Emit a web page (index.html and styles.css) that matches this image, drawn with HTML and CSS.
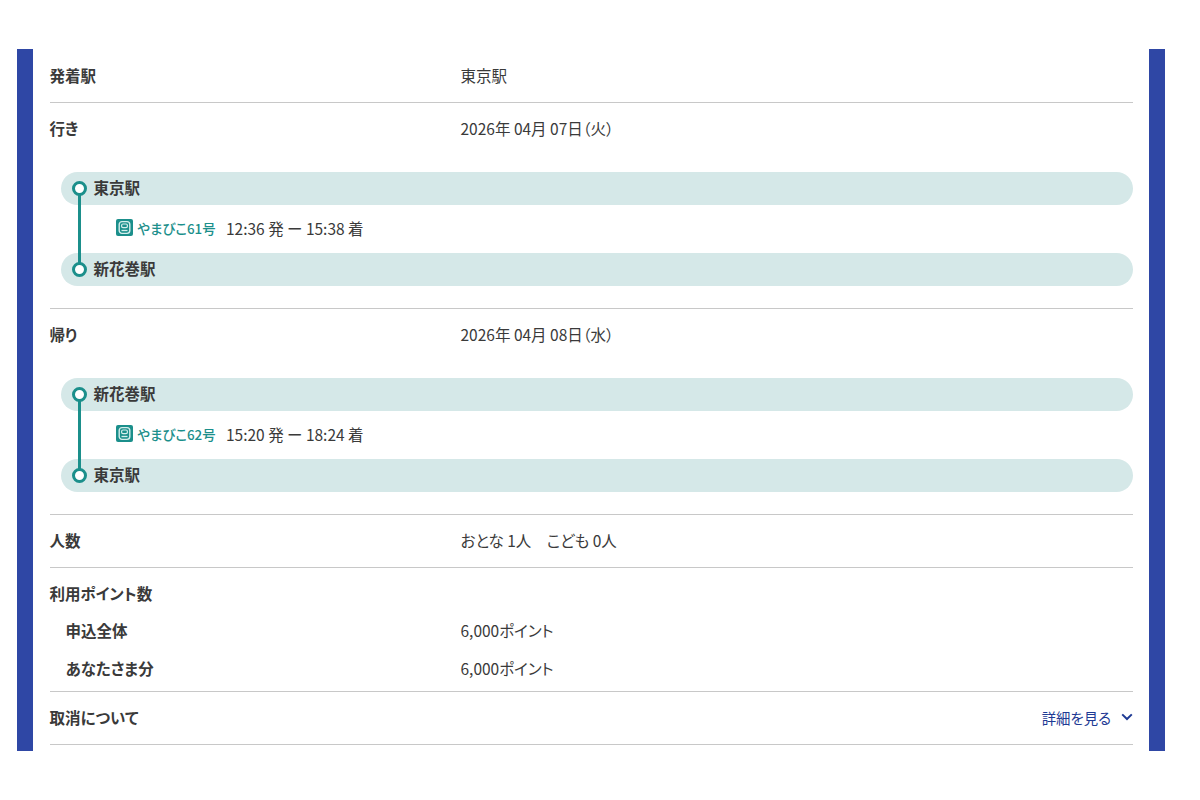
FILE: index.html
```html
<!DOCTYPE html>
<html lang="ja">
<head>
<meta charset="utf-8">
<title>申込内容</title>
<link rel="stylesheet" href="styles.css">
</head>
<body>
<main class="panel">
  <section class="row">
    <div class="line"><span class="label">発着駅</span><span>東京駅</span></div>
  </section>
  <section class="row">
    <div class="line"><span class="label">行き</span><span>2026年 04月 07日（火）</span></div>
    <div class="route">
      <div class="rail"></div>
      <div class="stop"><span class="dot"></span><span class="name">東京駅</span></div>
      <div class="train">
        <svg class="train-icon" viewBox="0 0 17 17"><rect width="17" height="17" rx="2" fill="#1b8f8b"/><rect x="3.2" y="2.6" width="10.6" height="11.8" rx="2.8" fill="none" stroke="#d5eeec" stroke-width="1.4"/><rect x="5.6" y="5" width="5.8" height="3.6" rx="1.4" fill="none" stroke="#d5eeec" stroke-width="1.2"/><path d="M5.5 11.5h6" stroke="#d5eeec" stroke-width="1.3"/></svg>
        <span class="train-name">やまびこ61号</span>
        <span>12:36 発 ー 15:38 着</span>
      </div>
      <div class="stop"><span class="dot"></span><span class="name">新花巻駅</span></div>
    </div>
  </section>
  <section class="row">
    <div class="line"><span class="label">帰り</span><span>2026年 04月 08日（水）</span></div>
    <div class="route">
      <div class="rail"></div>
      <div class="stop"><span class="dot"></span><span class="name">新花巻駅</span></div>
      <div class="train">
        <svg class="train-icon" viewBox="0 0 17 17"><rect width="17" height="17" rx="2" fill="#1b8f8b"/><rect x="3.2" y="2.6" width="10.6" height="11.8" rx="2.8" fill="none" stroke="#d5eeec" stroke-width="1.4"/><rect x="5.6" y="5" width="5.8" height="3.6" rx="1.4" fill="none" stroke="#d5eeec" stroke-width="1.2"/><path d="M5.5 11.5h6" stroke="#d5eeec" stroke-width="1.3"/></svg>
        <span class="train-name">やまびこ62号</span>
        <span>15:20 発 ー 18:24 着</span>
      </div>
      <div class="stop"><span class="dot"></span><span class="name">東京駅</span></div>
    </div>
  </section>
  <section class="row">
    <div class="line"><span class="label">人数</span><span>おとな 1人　こども 0人</span></div>
  </section>
  <section class="row points">
    <div class="pline"><span class="label">利用ポイント数</span></div>
    <div class="pline"><span class="label sub">申込全体</span><span>6,000ポイント</span></div>
    <div class="pline"><span class="label sub">あなたさま分</span><span>6,000ポイント</span></div>
  </section>
  <section class="row">
    <div class="line spread">
      <span class="label">取消について</span>
      <a class="more">詳細を見る<svg class="chev" viewBox="0 0 12 8"><path d="M1.2 1.4 6 6l4.8-4.6" fill="none" stroke="#1e3a94" stroke-width="2"/></svg></a>
    </div>
  </section>
</main>
</body>
</html>
```
FILE: styles.css
```css
* { box-sizing: border-box; }
html, body { margin: 0; background: #fff; }
body {
  font-family: "Noto Sans CJK JP", "Noto Sans", sans-serif;
  font-size: 15.5px;
  font-feature-settings: "palt";
  color: #3a3a3a;
  height: 800px;
  overflow: hidden;
}
.panel {
  width: 1148.5px;
  height: 701.5px;
  margin: 49px 0 0 16.5px;
  padding: 1px 16px 0 17px;
  border-left: 16.5px solid #2f47a5;
  border-right: 16.5px solid #2f47a5;
}
.row { border-bottom: 1px solid #c8c8c8; }
.line {
  height: 52px;
  padding-bottom: 2px;
  display: flex;
  align-items: center;
}
.spread { justify-content: space-between; }
.label {
  width: 411px;
  flex: none;
  font-weight: 700;
}
.sub { padding-left: 16px; }
.route {
  position: relative;
  margin: 17px 0 22px 11px;
}
.rail {
  position: absolute;
  left: 17px;
  top: 16px;
  width: 3px;
  height: 81px;
  background: #1b8f8b;
}
.stop {
  height: 33px;
  padding: 0 0 1px 11px;
  display: flex;
  align-items: center;
  border-radius: 17px;
  background: #d5e8e8;
  font-weight: 700;
  gap: 7px;
}
.name { margin-bottom: 2px; }
.dot {
  position: relative;
  width: 15px;
  height: 15px;
  border: 3.5px solid #1b8f8b;
  border-radius: 50%;
  background: #fff;
}
.train {
  height: 48px;
  padding: 0 0 3px 55px;
  display: flex;
  align-items: center;
}
.train-icon { width: 17px; height: 17px; margin-right: 5px; }
.train-name {
  font-size: 13.4px;
  font-weight: 500;
  color: #1b8f8b;
  width: 88.5px;
}
.points { padding: 7px 0 3.5px; }
.pline {
  height: 37.5px;
  padding-bottom: 2px;
  display: flex;
  align-items: center;
}
.more {
  display: flex;
  align-items: center;
  color: #1e3a94;
  font-size: 14.4px;
}
.chev { width: 12px; height: 8px; margin-left: 10px; }
```
